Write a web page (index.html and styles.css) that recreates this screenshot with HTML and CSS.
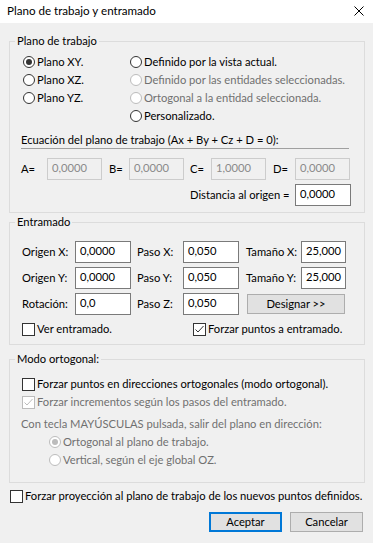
FILE: index.html
```html
<!DOCTYPE html>
<html lang="es">
<head>
<meta charset="utf-8">
<title>Plano de trabajo y entramado</title>
<link rel="stylesheet" href="styles.css">
</head>
<body>
<div class="window">
  <div class="titlebar">
    <span class="title">Plano de trabajo y entramado</span>
    <svg class="close" width="10" height="10" viewBox="0 0 10 10"><path d="M0.5 0.5 L9.5 9.5 M9.5 0.5 L0.5 9.5" stroke="#000" stroke-width="1" fill="none"/></svg>
  </div>

  <fieldset class="group g1">
    <legend>Plano de trabajo</legend>
    <div class="gbody g1body">
      <div class="plane-opts">
        <div class="col">
          <div class="opt"><span class="radio checked"></span><span>Plano XY.</span></div>
          <div class="opt"><span class="radio"></span><span>Plano XZ.</span></div>
          <div class="opt"><span class="radio"></span><span>Plano YZ.</span></div>
        </div>
        <div class="col">
          <div class="opt"><span class="radio"></span><span>Definido por la vista actual.</span></div>
          <div class="opt disabled"><span class="radio"></span><span>Definido por las entidades seleccionadas.</span></div>
          <div class="opt disabled"><span class="radio"></span><span>Ortogonal a la entidad seleccionada.</span></div>
          <div class="opt"><span class="radio"></span><span>Personalizado.</span></div>
        </div>
      </div>
      <div class="eq-title">Ecuación del plano de trabajo (Ax + By + Cz + D = 0):</div>
      <div class="coef-row">
        <span class="clabel ca">A=</span><span class="field off">0,0000</span>
        <span class="clabel cb">B=</span><span class="field off">0,0000</span>
        <span class="clabel cc">C=</span><span class="field off">1,0000</span>
        <span class="clabel cd">D=</span><span class="field off">0,0000</span>
      </div>
      <div class="dist-row">
        <span class="dlabel">Distancia al origen =</span><span class="field dfield">0,0000</span>
      </div>
    </div>
  </fieldset>

  <fieldset class="group g2">
    <legend>Entramado</legend>
    <div class="gbody g2body">
      <div class="grid-fields">
        <span class="glabel l1">Origen X:</span><span class="field">0,0000</span>
        <span class="glabel l2">Paso X:</span><span class="field">0,050</span>
        <span class="glabel l3">Tamaño X:</span><span class="field">25,000</span>
        <span class="glabel l1">Origen Y:</span><span class="field">0,0000</span>
        <span class="glabel l2">Paso Y:</span><span class="field">0,050</span>
        <span class="glabel l3">Tamaño Y:</span><span class="field">25,000</span>
        <span class="glabel l1">Rotación:</span><span class="field">0,0</span>
        <span class="glabel l2">Paso Z:</span><span class="field">0,050</span>
        <span class="button designar">Designar &gt;&gt;</span>
      </div>
      <div class="check-row">
        <div class="opt"><span class="check"></span><span>Ver entramado.</span></div>
        <div class="opt"><span class="check"><svg width="11" height="11" viewBox="0 0 11 11"><path d="M1.5 5.5 L4 8 L9.5 2" stroke="#333" stroke-width="1" fill="none"/></svg></span><span>Forzar puntos a entramado.</span></div>
      </div>
    </div>
  </fieldset>

  <fieldset class="group g3">
    <legend>Modo ortogonal:</legend>
    <div class="gbody g3body">
      <div class="opt ind1"><span class="check"></span><span>Forzar puntos en direcciones ortogonales (modo ortogonal).</span></div>
      <div class="opt ind1 disabled"><span class="check"><svg width="11" height="11" viewBox="0 0 11 11"><path d="M1.5 5.5 L4 8 L9.5 2" stroke="#bcbcbc" stroke-width="1" fill="none"/></svg></span><span>Forzar incrementos según los pasos del entramado.</span></div>
      <div class="opt disabled shift-label">Con tecla MAYÚSCULAS pulsada, salir del plano en dirección:</div>
      <div class="opt ind2 disabled"><span class="radio checked"></span><span>Ortogonal al plano de trabajo.</span></div>
      <div class="opt ind2 disabled"><span class="radio"></span><span>Vertical, según el eje global OZ.</span></div>
    </div>
  </fieldset>

  <div class="opt bottom-check"><span class="check"></span><span>Forzar proyección al plano de trabajo de los nuevos puntos definidos.</span></div>

  <div class="buttons">
    <span class="button default">Aceptar</span>
    <span class="button">Cancelar</span>
  </div>
</div>
</body>
</html>
```

FILE: styles.css
```css
html, body {
  margin: 0;
  padding: 0;
}
body {
  background: #f0f0f0;
  font-family: Lato, "Liberation Sans", sans-serif;
  font-size: 11.2px;
  line-height: 14px;
  color: #000;
}
.window {
  width: 373px;
  height: 543px;
  overflow: hidden;
}
.titlebar {
  height: 23px;
  background: #fff;
  display: flex;
  align-items: center;
  justify-content: space-between;
  padding: 0 9px 1px 7px;
  box-sizing: border-box;
}
.title {
  font-size: 11.6px;
}
.close {
  display: block;
}
.group {
  box-sizing: border-box;
  width: 356px;
  margin: 0 0 0 9px;
  padding: 0;
  border: 1px solid #dcdcdc;
  min-width: 0;
}
.group legend {
  padding: 0 2px;
  margin-left: 5px;
  line-height: 14px;
}
.g1 { margin-top: 11px; }
.g2 { margin-top: 2px; }
.g3 { margin-top: 7px; }

.gbody {
  padding-left: 11px;
}
.g1body { padding-top: 5px; padding-bottom: 6px; }
.g2body { padding-top: 12px; padding-bottom: 6px; }
.g3body { padding-top: 9px; padding-bottom: 13px; }

.opt {
  display: flex;
  align-items: center;
  height: 18px;
  gap: 2px;
  white-space: nowrap;
}
.disabled {
  color: #707070;
}
.radio {
  box-sizing: border-box;
  width: 12px;
  height: 12px;
  border: 1px solid #333;
  border-radius: 50%;
  background: #fff;
  display: inline-flex;
  align-items: center;
  justify-content: center;
  flex: none;
}
.radio.checked::after {
  content: "";
  width: 6px;
  height: 6px;
  border-radius: 50%;
  background: #333;
}
.disabled .radio {
  border-color: #bcbcbc;
}
.disabled .radio.checked::after {
  background: #bcbcbc;
}
.check {
  box-sizing: border-box;
  width: 13px;
  height: 13px;
  border: 1px solid #333;
  background: #fff;
  flex: none;
  display: inline-flex;
  align-items: center;
  justify-content: center;
}
.check svg { display: block; }
.disabled .check {
  border-color: #bcbcbc;
}

.plane-opts {
  display: grid;
  grid-template-columns: 107px auto;
  margin-left: 2px;
}

.eq-title {
  margin-top: 8px;
  width: 328px;
  padding-bottom: 1px;
  border-bottom: 1px solid #a0a0a0;
  white-space: nowrap;
}

.field {
  box-sizing: border-box;
  height: 22px;
  border: 1px solid #7a7a7a;
  background: #fff;
  padding: 0 0 0 4px;
  line-height: 18px;
  flex: none;
  display: block;
}
.field.off {
  border-color: #cccccc;
  background: #f0f0f0;
  color: #8a8a8a;
}
.coef-row {
  margin-top: 9px;
  display: flex;
  align-items: center;
  height: 22px;
}
.coef-row .field {
  width: 55px;
}
.clabel {
  display: block;
  flex: none;
}
.ca { width: 26px; }
.cb { width: 20px; padding-left: 7px; }
.cc { width: 21px; padding-left: 6px; }
.cd { width: 22px; padding-left: 7px; }

.dist-row {
  margin-top: 4px;
  display: flex;
  align-items: center;
  height: 22px;
  padding-left: 169px;
}
.dlabel {
  width: 105px;
  flex: none;
  white-space: nowrap;
}
.dfield {
  width: 56px;
}

.grid-fields {
  display: grid;
  grid-template-columns: 54px 56px 52px 56px 62px 45px;
  grid-auto-rows: 22px;
  row-gap: 4px;
  align-items: center;
}
.glabel {
  white-space: nowrap;
}
.l1 { padding-left: 1px; }
.l2 { padding-left: 6px; }
.l3 { padding-left: 7px; }
.grid-fields .field {
  width: 100%;
}
.button {
  box-sizing: border-box;
  height: 20px;
  background: #e1e1e1;
  border: 1px solid #adadad;
  display: flex;
  align-items: center;
  justify-content: center;
  padding-bottom: 1px;
}
.designar {
  grid-column: 5 / span 2;
  margin-left: 8px;
  width: 98px;
}
.check-row {
  margin-top: 5px;
  display: grid;
  grid-template-columns: 171px auto;
  margin-left: 1px;
}

.ind1 { margin-left: 1px; }
.shift-label { margin-top: 4px; }
.ind2 { margin-left: 28px; }

.bottom-check {
  margin: 4px 0 0 10px;
}
.buttons {
  margin-top: 7px;
  display: flex;
  justify-content: flex-end;
  gap: 8px;
  padding-right: 10px;
}
.buttons .button {
  width: 73px;
}
.button.default {
  border: 2px solid #0078d7;
}
```
